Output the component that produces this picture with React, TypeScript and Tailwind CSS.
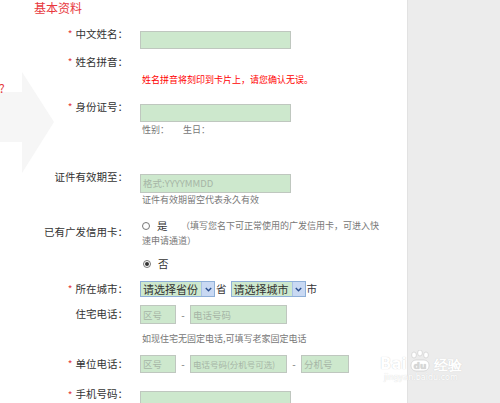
import React from "react";

const font = "font-['Noto_Sans_CJK_SC','Noto_Sans',sans-serif]";

function Label({ text, required }: { text: string; required?: boolean }) {
  return (
    <div className="w-[128px] h-full shrink-0 flex items-center justify-end text-[10.5px] leading-none text-[#333]">
      {required && <span className="text-[#e4393c] mr-[3px] text-[10px]">*</span>}
      <span>{text}：</span>
    </div>
  );
}

function Field({ w, placeholder, small }: { w: number; placeholder?: string; small?: boolean }) {
  return (
    <input
      readOnly
      placeholder={placeholder}
      style={{ width: w }}
      className={`h-full min-w-0 bg-[#cde8cd] border border-[#bfc7bf] px-[2px] ${small ? "text-[8.5px]" : "text-[9.5px]"} text-[#333] placeholder:text-[#a6b5a6] outline-none`}
    />
  );
}

function FakeSelect({ text }: { text: string }) {
  return (
    <div className="h-[16px] w-[75px] flex border border-[#8fb0d8] bg-[#cde8cd]">
      <span className="flex-1 text-[11px] leading-[14px] pl-[2px] text-[#333] whitespace-nowrap">{text}</span>
      <span className="w-[13px] bg-[#c9d9f3] border-l border-[#a9c1e6] flex items-center justify-center">
        <svg width="7" height="5" viewBox="0 0 7 5">
          <path d="M0.8 1 L3.5 3.8 L6.2 1" fill="none" stroke="#2b4f8f" strokeWidth="1.4" />
        </svg>
      </span>
    </div>
  );
}

function Radio({ checked }: { checked?: boolean }) {
  return (
    <span className="w-[8px] h-[8px] shrink-0 rounded-full border border-[#777] flex items-center justify-center bg-white">
      {checked && <span className="w-[4px] h-[4px] rounded-full bg-[#333]" />}
    </span>
  );
}

export default function App() {
  return (
    <div className={`w-[500px] h-[403px] flex overflow-hidden bg-white ${font}`}>
      <div className="relative w-[407px] h-full bg-white">
        {/* faint background arrow */}
        <svg className="absolute left-0 top-[70px]" width="56" height="105" viewBox="0 0 56 105">
          <path d="M0 22 L22 22 L22 2 L54 52 L22 103 L22 72 L0 72 Z" fill="#f6f6f6" />
        </svg>
        <span className="absolute left-[-1px] top-[82px] text-[12px] leading-none text-[#e4393c]">?</span>

        <div className="relative flex flex-col">
          <div className="h-[16px] pl-[34px] text-[12px] leading-[16px] text-[#e8383d]">基本资料</div>

          <div className="mt-[9px] h-[18px] flex">
            <Label text="中文姓名" required />
            <div className="ml-[12px] h-full"><Field w={151} /></div>
          </div>

          <div className="mt-[10px] h-[18px] flex">
            <Label text="姓名拼音" required />
          </div>

          <div className="mt-[2px] h-[14px] pl-[142px] text-[9px] leading-[14px] text-[#f00]">
            姓名拼音将刻印到卡片上，请您确认无误。
          </div>

          <div className="mt-[11px] h-[18px] flex">
            <Label text="身份证号" required />
            <div className="ml-[12px] h-full"><Field w={151} /></div>
          </div>

          <div className="mt-[7px] h-[14px] pl-[142px] flex gap-[14px] text-[9px] leading-[14px] text-[#777]">
            <span>性别：</span>
            <span>生日：</span>
          </div>

          <div className="mt-[31px] h-[19px] flex">
            <Label text="证件有效期至" />
            <div className="ml-[12px] h-full"><Field w={151} placeholder="格式:YYYYMMDD" /></div>
          </div>

          <div className="mt-[6px] h-[14px] pl-[142px] text-[9px] leading-[14px] text-[#777]">
            证件有效期留空代表永久有效
          </div>

          <div className="mt-[11px] h-[30px] flex items-start">
            <div className="w-[128px] shrink-0 pt-[9px] text-right text-[10.5px] leading-none text-[#333]">已有广发信用卡：</div>
            <div className="ml-[14px] w-[242px] h-[30px] text-[9px] leading-[15px] text-[#777]">
              <span className="inline-block w-[8px] h-[8px] mr-[7px] rounded-full border border-[#777] bg-white align-[-1px]" />
              <span className="inline-block w-[11px] text-[10.5px] leading-[15px] text-[#333] mr-[13px] align-top">是</span>
              （填写您名下可正常使用的广发信用卡，可进入快速申请通道）
            </div>
          </div>

          <div className="mt-[9px] h-[14px] pl-[143px] flex items-center gap-[7px]">
            <Radio checked />
            <span className="text-[10.5px] leading-none text-[#333]">否</span>
          </div>

          <div className="mt-[10px] h-[16px] flex">
            <Label text="所在城市" required />
            <div className="ml-[12px] flex items-center text-[10.5px] leading-none text-[#333]">
              <FakeSelect text="请选择省份" />
              <span className="ml-[1px] mr-[4px]">省</span>
              <FakeSelect text="请选择城市" />
              <span className="ml-[1px]">市</span>
            </div>
          </div>

          <div className="mt-[8px] h-[19px] flex">
            <Label text="住宅电话" />
            <div className="ml-[12px] h-full flex items-center">
              <Field w={36} placeholder="区号" />
              <span className="w-[14px] text-center text-[10px] leading-none text-[#777]">-</span>
              <Field w={97} placeholder="电话号码" />
            </div>
          </div>

          <div className="mt-[8px] h-[14px] pl-[142px] text-[9px] leading-[14px] text-[#777]">
            如现住宅无固定电话,可填写老家固定电话
          </div>

          <div className="mt-[9px] h-[18px] flex">
            <Label text="单位电话" required />
            <div className="ml-[12px] h-full flex items-center">
              <Field w={36} placeholder="区号" />
              <span className="w-[14px] text-center text-[10px] leading-none text-[#777]">-</span>
              <Field w={97} placeholder="电话号码(分机号可选)" small />
              <span className="w-[14px] text-center text-[10px] leading-none text-[#777]">-</span>
              <Field w={48} placeholder="分机号" />
            </div>
          </div>

          <div className="mt-[12px] h-[19px] flex">
            <Label text="手机号码" required />
            <div className="ml-[12px] h-full"><Field w={151} /></div>
          </div>
        </div>
      </div>

      <div className="relative flex-1 h-full bg-[#ececec] border-l border-[#e2e2e2]">
        <div className="absolute left-[-28px] top-[350px] flex flex-col items-center text-white [text-shadow:0_0_1px_#c8c8c8]">
          <div className="flex items-end gap-[1px] text-[15px] leading-none font-bold font-['DejaVu_Sans',sans-serif]">
            <span>Bai</span>
            <svg width="24" height="22" viewBox="0 0 24 22">
              <g fill="#fff" stroke="#cfcfcf" strokeWidth="0.7">
                <ellipse cx="6" cy="5" rx="2.4" ry="3" />
                <ellipse cx="12" cy="3" rx="2.4" ry="3" />
                <ellipse cx="18" cy="5" rx="2.4" ry="3" />
                <rect x="3" y="10" width="18" height="11" rx="5" />
              </g>
              <text x="12" y="19" textAnchor="middle" fontSize="9" fontWeight="bold" fill="#d6d6d6" fontFamily="DejaVu Sans">du</text>
            </svg>
            <span className="text-[14px] ml-[1px]">经验</span>
          </div>
          <div className="mt-[2px] text-[8px] leading-none font-['DejaVu_Sans',sans-serif]">jingyan.baidu.com</div>
        </div>
      </div>
    </div>
  );
}
